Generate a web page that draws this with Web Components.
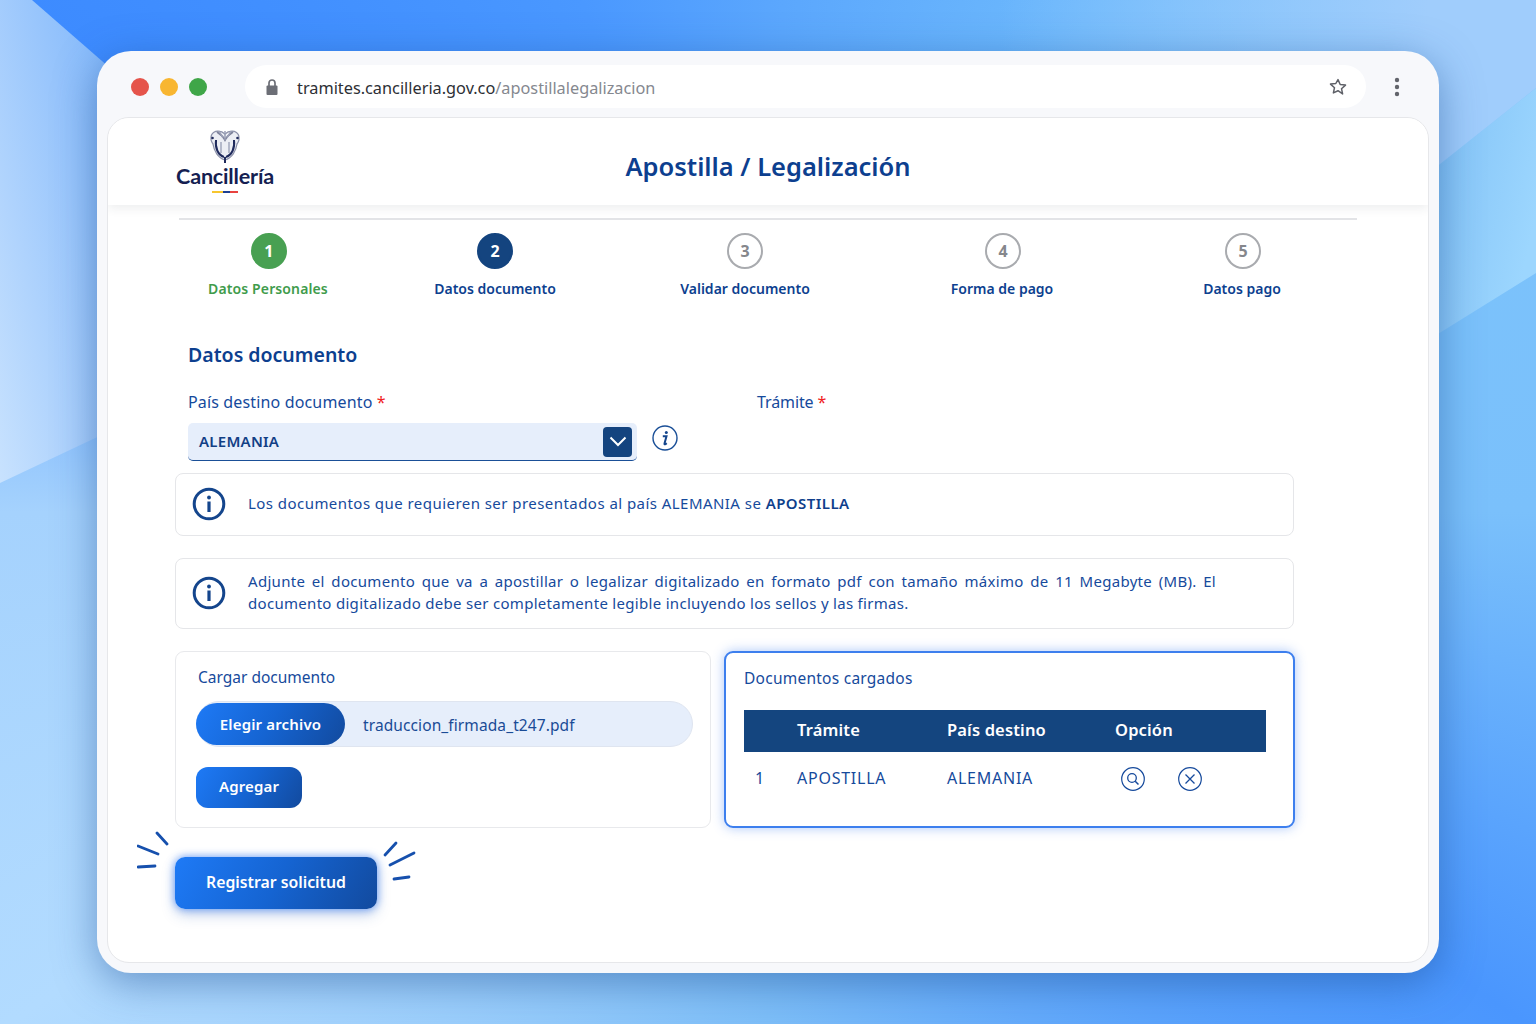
<!DOCTYPE html>
<html lang="es">
<head>
<meta charset="utf-8">
<title>Apostilla / Legalización</title>
<style>
    html, body { margin: 0; height: 100%; }
    body {
        position: relative;
        width: 1536px;
        height: 1024px;
        overflow: hidden;
        box-sizing: border-box;
        padding: 51px 97px;
        font-family: "Noto Sans", sans-serif;
        background: conic-gradient(from 0deg at 50% 50%, #5aa6fd 0deg, #6db9fc 33deg, #7cc3fb 61deg, #7ac0fb 90deg, #4a96fe 124deg, #7dbef8 180deg, #b2dbff 236deg, #a5d2fd 270deg, #3d8bff 304deg, #4a98ff 340deg, #5aa6fd 360deg);
    }
</style>
</head>
<body>
<page-backdrop></page-backdrop>
<browser-window url-host="tramites.cancilleria.gov.co" url-path="/apostillalegalizacion">
    <site-header title="Apostilla / Legalización"></site-header>
    <step-bar>
        <step-item num="1" state="done">Datos Personales</step-item>
        <step-item num="2" state="active">Datos documento</step-item>
        <step-item num="3">Validar documento</step-item>
        <step-item num="4">Forma de pago</step-item>
        <step-item num="5">Datos pago</step-item>
    </step-bar>
    <document-form></document-form>
</browser-window>

<script>
class PageBackdrop extends HTMLElement {
    constructor() {
        super();
        this.attachShadow({ mode: 'open' });
    }
    connectedCallback() {
        this.shadowRoot.innerHTML = `
            <style>
                :host { position: absolute; inset: 0; display: block; }
                svg { display: block; }
            </style>
            <svg width="1536" height="1024" viewBox="0 0 1536 1024">
                <defs>
                    <linearGradient id="l" x1="1" y1="0" x2="0" y2="1">
                        <stop offset="0" stop-color="#7fb6fb"/>
                        <stop offset="1" stop-color="#c8e2fe"/>
                    </linearGradient>
                    <linearGradient id="r" x1="0" y1="0" x2="1" y2="0.5">
                        <stop offset="0" stop-color="#7fc0f6"/>
                        <stop offset="1" stop-color="#9cd6fe"/>
                    </linearGradient>
                    <linearGradient id="t" x1="0" y1="0" x2="1" y2="0">
                        <stop offset="0" stop-color="#a0cdfc" stop-opacity="0"/>
                        <stop offset="0.8" stop-color="#a0cdfc"/>
                    </linearGradient>
                </defs>
                <polygon points="0,0 32,0 110,68 110,431 0,483" fill="url(#l)"/>
                <polygon points="1425,176 1536,88 1536,273 1425,342" fill="url(#r)"/>
                <polygon points="1000,0 1536,0 1536,88 1425,176 1000,176" fill="url(#t)"/>
            </svg>
        `;
    }
}

class BrowserWindow extends HTMLElement {
    constructor() {
        super();
        this.attachShadow({ mode: 'open' });
    }
    connectedCallback() {
        this.shadowRoot.innerHTML = `
            <style>
                :host {
                    position: relative;
                    display: block;
                    box-sizing: border-box;
                    width: 1342px;
                    height: 922px;
                    padding: 14px 10px 10px;
                    background: #f7f8fb;
                    border-radius: 34px;
                    box-shadow: 0 10px 40px rgb(30 80 150 / 0.5);
                }
                .bar {
                    display: flex;
                    align-items: center;
                    height: 43px;
                    margin-bottom: 9px;
                    padding-left: 24px;
                }
                .dot { width: 18px; height: 18px; border-radius: 50%; margin-right: 11px; }
                .dot.last { margin-right: 38px; }
                .address {
                    display: flex;
                    align-items: center;
                    box-sizing: border-box;
                    width: 1121px;
                    height: 43px;
                    padding: 0 19px 0 20px;
                    background: #fff;
                    border-radius: 22px;
                    font-size: 16.3px;
                    color: #2d2f35;
                }
                .address span { padding-top: 2px; }
                .address svg.lock { margin-right: 18px; }
                .path { color: #85888f; }
                .star { margin-left: auto; }
                .menu { margin-left: 47px; margin-right: -53px; }
                .page {
                    box-sizing: border-box;
                    height: 846px;
                    background: #fff;
                    border: 1.5px solid #e6e7ea;
                    border-radius: 22px;
                    overflow: hidden;
                }
            </style>
            <div class="bar">
                <div class="dot" style="background:#e5544b"></div>
                <div class="dot" style="background:#f8b631"></div>
                <div class="dot last" style="background:#3fa648"></div>
                <div class="address">
                    <svg class="lock" width="14" height="18" viewBox="0 0 14 18">
                        <path d="M4 8V5a3 3 0 0 1 6 0v3" fill="none" stroke="#6c6e76" stroke-width="1.7"/>
                        <rect x="1.5" y="7.5" width="11" height="9.5" rx="1" fill="#6c6e76"/>
                    </svg>
                    <span>${this.getAttribute('url-host')}</span><span class="path">${this.getAttribute('url-path')}</span>
                    <svg class="star" width="18" height="18" viewBox="0 0 18 18">
                        <path d="M9 1.6l2.2 4.9 5.3.6-4 3.6 1.1 5.2L9 12.7l-4.6 2.2 1.1-5.2-4-3.6 5.3-.6z" fill="none" stroke="#5f6168" stroke-width="1.5" stroke-linejoin="round"/>
                    </svg>
                    <svg class="menu" width="6" height="20" viewBox="0 0 6 20">
                        <circle cx="3" cy="3" r="2.2" fill="#62646b"/>
                        <circle cx="3" cy="10" r="2.2" fill="#62646b"/>
                        <circle cx="3" cy="17" r="2.2" fill="#62646b"/>
                    </svg>
                </div>
            </div>
            <div class="page"><slot></slot></div>
        `;
    }
}

class SiteHeader extends HTMLElement {
    constructor() {
        super();
        this.attachShadow({ mode: 'open' });
    }
    connectedCallback() {
        this.shadowRoot.innerHTML = `
            <style>
                :host {
                    display: grid;
                    grid-template-columns: 1fr auto 1fr;
                    box-sizing: border-box;
                    height: 87px;
                    background: #fff;
                    box-shadow: 0 3px 10px rgb(40 50 70 / 0.09);
                }
                .logo {
                    display: flex;
                    flex-direction: column;
                    align-items: center;
                    width: 100px;
                    margin-left: 67px;
                    padding-top: 11px;
                }
                svg { margin-bottom: -2px; }
                .name {
                    font-family: "Lato", sans-serif;
                    font-weight: 700;
                    font-size: 21.6px;
                    line-height: 26px;
                    color: #151f52;
                    letter-spacing: -0.2px;
                    white-space: nowrap;
                }
                .flag { display: flex; height: 2px; width: 26px; margin-top: 2px; }
                .flag i { display: block; }
                h1 {
                    align-self: center;
                    margin: 8px 0 0;
                    font-size: 25.5px;
                    font-weight: 600;
                    color: #0d3f8f;
                    white-space: nowrap;
                }
            </style>
            <div class="logo">
                <svg width="32" height="36" viewBox="0 0 32 36" fill="none">
                    <path d="M16 5C12 1 5 1 2.500 6 C1.500 9 2.500 13 4 15 C5 22 9 29 16 31 C23 29 27 22 28 15 C29.500 13 30.500 9 29.500 6 C27 1 20 1 16 5Z" fill="#eceef4" stroke="#8d92aa" stroke-width="1.300"/>
                    <path d="M8 3 C11 5 14 7 16 11 C18 7 21 5 24 3" stroke="#7c8199" stroke-width="1.800"/>
                    <path d="M10 2 L14 9 M22 2 L18 9 M16 2 V11" stroke="#9a9fb6" stroke-width="1.500"/>
                    <path d="M7 11 C6 19 9 26 15 28" stroke="#1f2a5c" stroke-width="2"/>
                    <path d="M25 11 C26 19 23 26 17 28" stroke="#1f2a5c" stroke-width="2"/>
                    <path d="M12 13 V24 M20 13 V24" stroke="#a2a7bd" stroke-width="1.500"/>
                    <path d="M16 28 V34" stroke="#1f2a5c" stroke-width="2"/>
                    <circle cx="3.500" cy="9" r="1.300" fill="#1f2a5c"/>
                    <circle cx="28.500" cy="9" r="1.300" fill="#1f2a5c"/>
                </svg>
                <div class="name">Cancillería</div>
                <div class="flag">
                    <i style="width:11px;background:#f7c62f"></i>
                    <i style="width:7px;background:#1d3f92"></i>
                    <i style="width:8px;background:#e8433f"></i>
                </div>
            </div>
            <h1>${this.getAttribute('title')}</h1>
            <div></div>
        `;
    }
}

class StepBar extends HTMLElement {
    constructor() {
        super();
        this.attachShadow({ mode: 'open' });
    }
    connectedCallback() {
        this.shadowRoot.innerHTML = `
            <style>
                :host {
                    display: grid;
                    grid-template-columns: 178px 276px 224px 290px 190px;
                    box-sizing: border-box;
                    width: 1178px;
                    height: 118px;
                    margin: 13px 0 0 71px;
                    padding-top: 13px;
                    border-top: 2px solid #e3e4e7;
                }
            </style>
            <slot></slot>
        `;
    }
}

class StepItem extends HTMLElement {
    constructor() {
        super();
        this.attachShadow({ mode: 'open' });
    }
    connectedCallback() {
        const state = this.getAttribute('state') || '';
        this.shadowRoot.innerHTML = `
            <style>
                :host {
                    display: flex;
                    flex-direction: column;
                    align-items: center;
                    font-size: 14px;
                    font-weight: 600;
                    color: #0d3f8f;
                }
                :host([num="1"]) { letter-spacing: 0.12px; }
                .num {
                    display: flex;
                    align-items: center;
                    justify-content: center;
                    box-sizing: border-box;
                    width: 36px;
                    height: 36px;
                    margin: 0 0 10px 2px;
                    border: 2px solid #a9abaf;
                    border-radius: 50%;
                    font-size: 16px;
                    font-weight: 700;
                    color: #85878c;
                    background: #fff;
                }
                :host([num="2"]) .num, :host([num="3"]) .num { margin-left: 0; }
                .done .num { background: #48a052; border-color: #48a052; color: #fff; }
                .done .label { color: #3f9c4c; }
                .active .num { background: #14447f; border-color: #14447f; color: #fff; }
                .wrap { display: flex; flex-direction: column; align-items: center; }
                .label { white-space: nowrap; line-height: 20px; }
            </style>
            <div class="wrap ${state}">
                <div class="num">${this.getAttribute('num')}</div>
                <div class="label"><slot></slot></div>
            </div>
        `;
    }
}

class InfoNote extends HTMLElement {
    constructor() {
        super();
        this.attachShadow({ mode: 'open' });
    }
    connectedCallback() {
        this.shadowRoot.innerHTML = `
            <style>
                :host {
                    display: flex;
                    align-items: center;
                    box-sizing: border-box;
                    width: 1119px;
                    padding: 0 0 2px 16px;
                    border: 1.5px solid #e5e6e9;
                    border-radius: 8px;
                    background: #fff;
                    font-size: 15px;
                    line-height: 21.500px;
                    color: #164a9c;
                }
                svg { flex: none; margin-right: 22px; }
            </style>
            <svg width="34" height="34" viewBox="0 0 34 34">
                <circle cx="17" cy="17" r="14.800" fill="none" stroke="#14458c" stroke-width="3"/>
                <circle cx="17" cy="10.500" r="1.900" fill="#14458c"/>
                <rect x="15.400" y="14.500" width="3.200" height="10.500" fill="#14458c"/>
            </svg>
            <div><slot></slot></div>
        `;
    }
}

class SelectField extends HTMLElement {
    constructor() {
        super();
        this.attachShadow({ mode: 'open' });
    }
    connectedCallback() {
        this.shadowRoot.innerHTML = `
            <style>
                :host {
                    display: flex;
                    align-items: center;
                    justify-content: space-between;
                    box-sizing: border-box;
                    width: 449px;
                    height: 38px;
                    padding: 0 5px 0 11px;
                    background: #e6eefb;
                    border-bottom: 1.5px solid #1a4f97;
                    border-radius: 5px;
                    font-size: 15px;
                    font-weight: 600;
                    letter-spacing: 0.25px;
                    color: #123f85;
                }
                .text { padding-bottom: 2px; }
                .btn {
                    display: flex;
                    align-items: center;
                    justify-content: center;
                    width: 29px;
                    height: 30px;
                    background: #14447f;
                    border-radius: 4px;
                }
            </style>
            <span class="text"><slot></slot></span>
            <div class="btn">
                <svg width="18" height="11" viewBox="0 0 18 11"><path d="M1.500 1.500L9 9l7.500-7.500" fill="none" stroke="#fff" stroke-width="2"/></svg>
            </div>
        `;
    }
}

class ActionButton extends HTMLElement {
    constructor() {
        super();
        this.attachShadow({ mode: 'open' });
    }
    connectedCallback() {
        this.shadowRoot.innerHTML = `
            <style>
                :host {
                    display: inline-flex;
                    align-items: center;
                    justify-content: center;
                    box-sizing: border-box;
                    background: linear-gradient(120deg, #1e7af6 0%, #1564d2 50%, #124a9e 100%);
                    color: #fff;
                    font-weight: 600;
                    font-size: 15px;
                    letter-spacing: 0.15px;
                    white-space: nowrap;
                }
            </style>
            <slot></slot>
        `;
    }
}

class DocTable extends HTMLElement {
    constructor() {
        super();
        this.attachShadow({ mode: 'open' });
    }
    connectedCallback() {
        this.shadowRoot.innerHTML = `
            <style>
                :host { display: block; width: 522px; color: #164a9c; font-size: 16px; letter-spacing: 0.75px; }
                .row {
                    display: grid;
                    grid-template-columns: 53px 150px 168px 1fr;
                    align-items: center;
                }
                .head {
                    box-sizing: border-box;
                    height: 42px;
                    padding-bottom: 4px;
                    background: #14457f;
                    color: #fff;
                    font-weight: 600;
                    font-size: 16.500px;
                    letter-spacing: 0.15px;
                }
                .body { height: 52px; }
                .body div:first-child { padding-left: 11px; }
                .opts { display: flex; gap: 33px; padding-left: 6px; margin-top: 2px; }
                svg { display: block; }
            </style>
            <div class="row head"><div></div><div>Trámite</div><div>País destino</div><div>Opción</div></div>
            <div class="row body">
                <div>1</div><div>APOSTILLA</div><div>ALEMANIA</div>
                <div class="opts">
                    <svg width="24" height="24" viewBox="0 0 24 24" fill="none" stroke="#164a9c">
                        <circle cx="12" cy="12" r="11.300" stroke-width="1.200"/>
                        <circle cx="11" cy="11" r="4.300" stroke-width="1.300"/>
                        <path d="M14.200 14.200L17.500 17.500" stroke-width="1.500"/>
                    </svg>
                    <svg width="24" height="24" viewBox="0 0 24 24" fill="none" stroke="#164a9c">
                        <circle cx="12" cy="12" r="11.300" stroke-width="1.200"/>
                        <path d="M7.500 7.500L16.500 16.500M16.500 7.500L7.500 16.500" stroke-width="1.300"/>
                    </svg>
                </div>
            </div>
        `;
    }
}

class DocumentForm extends HTMLElement {
    constructor() {
        super();
        this.attachShadow({ mode: 'open' });
    }
    connectedCallback() {
        this.shadowRoot.innerHTML = `
            <style>
                :host {
                    display: block;
                    padding: 5px 0 0 67px;
                    color: #164a9c;
                }
                h2 {
                    margin: 0 0 0 13px;
                    height: 27px;
                    font-size: 19.500px;
                    line-height: 27px;
                    font-weight: 600;
                    color: #0d3f8f;
                }
                .labels {
                    display: flex;
                    margin: 23px 0 0 13px;
                    height: 22px;
                    line-height: 22px;
                    font-size: 16px;
                    letter-spacing: 0.15px;
                }
                .labels span:first-child { width: 569px; }
                .labels .short { letter-spacing: -0.1px; }
                .req { color: #f0211c; }
                .field {
                    display: flex;
                    align-items: center;
                    margin: 10px 0 12px 13px;
                    height: 38px;
                }
                .hint { margin: -8px 0 0 15px; display: block; }
                .note1 { height: 63px; margin-bottom: 22px; letter-spacing: 0.45px; }
                .note2 { height: 71px; margin-bottom: 22px; letter-spacing: 0.3px; }
                .first-line { display: block; width: 968px; text-align: justify; text-align-last: justify; }
                .panels { display: flex; gap: 13px; height: 177px; }
                .panel {
                    box-sizing: border-box;
                    height: 177px;
                    border-radius: 9px;
                    background: #fff;
                    font-size: 15.500px;
                }
                .upload {
                    width: 536px;
                    padding: 14px 0 0 20px;
                    border: 1.500px solid #e8e9ec;
                }
                .title { line-height: 22px; }
                .upload .title { padding-left: 2px; }
                .file {
                    display: flex;
                    align-items: center;
                    box-sizing: border-box;
                    width: 497px;
                    height: 46px;
                    margin: 13px 0 20px;
                    background: #e6eefb;
                    border: 1.500px solid #dfe5f0;
                    border-radius: 23px;
                }
                .file .choose {
                    width: 149px;
                    height: 42px;
                    margin-left: -1px;
                    border-radius: 21px;
                }
                .file span { margin-left: 18px; padding-top: 2px; color: #1a4b96; letter-spacing: 0.1px; }
                .add { width: 106px; height: 41px; padding-bottom: 3px; border-radius: 12px; }
                .loaded {
                    width: 571px;
                    padding: 14px 0 0 18px;
                    border: 2px solid #3d7fee;
                    box-shadow: 0 0 12px rgb(70 130 240 / 0.45);
                }
                .loaded .title { margin-bottom: 21px; letter-spacing: 0.25px; }
                .register {
                    position: relative;
                    width: 202px;
                    height: 52px;
                    margin-top: 29px;
                }
                .register action-button {
                    width: 202px;
                    height: 52px;
                    padding-bottom: 2px;
                    border-radius: 10px;
                    font-size: 15.800px;
                    letter-spacing: 0;
                    box-shadow: 0 0 8px rgb(50 120 245 / 0.75), 0 6px 14px rgb(40 90 180 / 0.25);
                }
                .sparks { position: absolute; left: -38px; top: -27px; pointer-events: none; }
            </style>
            <h2>Datos documento</h2>
            <div class="labels">
                <span>País destino documento <span class="req">*</span></span>
                <span class="short">Trámite <span class="req">*</span></span>
            </div>
            <div class="field">
                <select-field>ALEMANIA</select-field>
                <svg class="hint" width="26" height="26" viewBox="0 0 26 26">
                    <circle cx="13" cy="13" r="12" fill="none" stroke="#1a4f97" stroke-width="1.400"/>
                    <circle cx="14.300" cy="7.500" r="1.500" fill="#14458c"/>
                    <path d="M10.800 11.300h3.700l-2 7.200c-.2.800.4 1 1 .7l1.300-.9" fill="none" stroke="#14458c" stroke-width="2"/>
                </svg>
            </div>
            <info-note class="note1">
                <span>Los documentos que requieren ser presentados al país ALEMANIA se <b style="font-weight:600;color:#0f3f8c">APOSTILLA</b></span>
            </info-note>
            <info-note class="note2">
                <span class="first-line">Adjunte el documento que va a apostillar o legalizar digitalizado en formato pdf con tamaño máximo de 11 Megabyte (MB). El</span>
                <span>documento digitalizado debe ser completamente legible incluyendo los sellos y las firmas.</span>
            </info-note>
            <div class="panels">
                <section class="panel upload">
                    <div class="title">Cargar documento</div>
                    <div class="file">
                        <action-button class="choose">Elegir archivo</action-button>
                        <span>traduccion_firmada_t247.pdf</span>
                    </div>
                    <action-button class="add">Agregar</action-button>
                </section>
                <section class="panel loaded">
                    <div class="title">Documentos cargados</div>
                    <doc-table></doc-table>
                </section>
            </div>
            <div class="register">
                <action-button>Registrar solicitud</action-button>
                <svg class="sparks" width="285" height="60" viewBox="137 831 285 60" fill="none" stroke="#1650ad" stroke-width="2.800" stroke-linecap="round">
                    <path d="M157 834L167 845M138 847L158 855M138 868L155 867"/>
                    <path d="M385 856L396 844M390 866L414 854M394 880L409 878"/>
                </svg>
            </div>
        `;
    }
}

customElements.define('page-backdrop', PageBackdrop);
customElements.define('browser-window', BrowserWindow);
customElements.define('site-header', SiteHeader);
customElements.define('step-bar', StepBar);
customElements.define('step-item', StepItem);
customElements.define('info-note', InfoNote);
customElements.define('select-field', SelectField);
customElements.define('action-button', ActionButton);
customElements.define('doc-table', DocTable);
customElements.define('document-form', DocumentForm);
</script>
</body>
</html>
